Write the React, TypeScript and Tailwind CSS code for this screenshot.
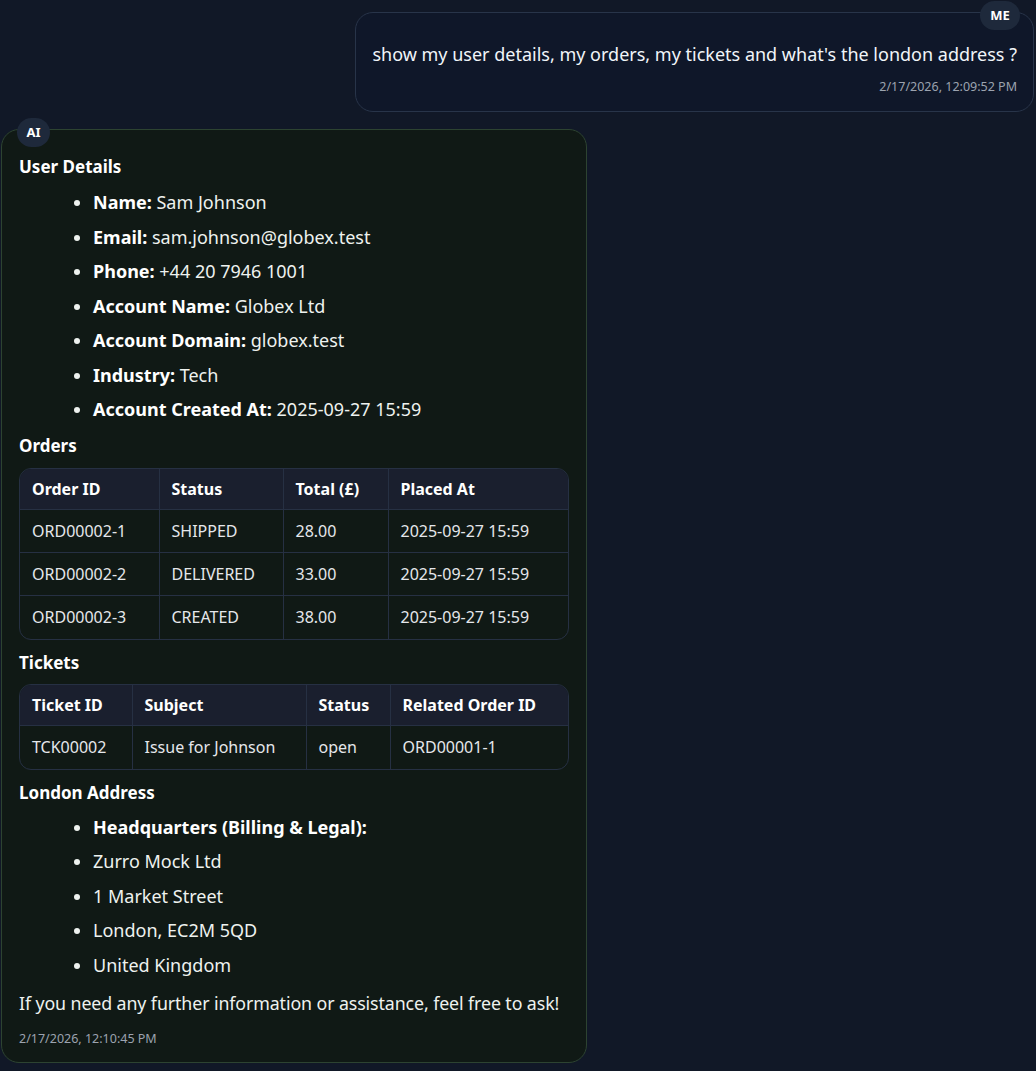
import React from 'react';

const font = { fontFamily: '"Segoe UI", "Noto Sans", sans-serif' };

const orders = [
  ['ORD00002-1', 'SHIPPED', '28.00', '2025-09-27 15:59'],
  ['ORD00002-2', 'DELIVERED', '33.00', '2025-09-27 15:59'],
  ['ORD00002-3', 'CREATED', '38.00', '2025-09-27 15:59'],
];

const tickets = [['TCK00002', 'Issue for Johnson', 'open', 'ORD00001-1']];

function Table({ cols, widths, rows }: { cols: string[]; widths: string[]; rows: string[][] }) {
  return (
    <div className="overflow-hidden rounded-[12px] border border-[#263043]">
      <table className="w-full border-collapse text-[16px] text-[#e5e7eb]">
        <thead>
          <tr className="bg-[#1a1f2e]">
            {cols.map((c, i) => (
              <th
                key={c}
                className={`h-[41px] px-[12px] text-left font-bold text-white border-b border-[#263043] ${i > 0 ? 'border-l' : ''} ${widths[i]}`}
              >
                {c}
              </th>
            ))}
          </tr>
        </thead>
        <tbody>
          {rows.map((r, ri) => (
            <tr key={ri}>
              {r.map((v, i) => (
                <td
                  key={i}
                  className={`h-[43px] px-[12px] border-[#263043] ${i > 0 ? 'border-l' : ''} ${ri < rows.length - 1 ? 'border-b' : ''}`}
                >
                  {v}
                </td>
              ))}
            </tr>
          ))}
        </tbody>
      </table>
    </div>
  );
}

function Item({ label, value }: { label?: string; value?: string }) {
  return (
    <li className="leading-[34.5px]">
      {label && <strong className="font-bold text-white">{label}</strong>}
      {value && <span> {value}</span>}
    </li>
  );
}

export default function App() {
  return (
    <div className="min-h-screen bg-[#111827] pt-[12px] pl-[1px] pr-[2px]" style={font}>
      <div className="flex justify-end">
        <div className="relative w-[679px] rounded-[18px] border border-[#283449] bg-[#0f1729] pt-[28px] pb-[16px] pr-[16px] text-right">
          <div className="absolute right-[13px] -top-[12px] flex h-[29px] w-[40px] items-center justify-center rounded-full bg-[#1e293b] text-[13px] font-bold text-white">
            ME
          </div>
          <p className="text-[18px] leading-[27px] text-[#f1f5f9]">
            show my user details, my orders, my tickets and what's the london address ?
          </p>
          <p className="mt-[11px] text-[12.5px] leading-[16px] text-[#9ca3af]">2/17/2026, 12:09:52 PM</p>
        </div>
      </div>

      <div className="relative mt-[17px] w-[586px] rounded-[18px] border border-[#2d4331] bg-[#101915] px-[17px] pt-[25px] pb-[15px] text-[18px] text-[#eef2ef]">
        <div className="absolute left-[15px] -top-[12px] flex h-[29px] w-[33px] items-center justify-center rounded-full bg-[#1e293b] text-[13px] font-bold text-white">
          AI
        </div>

        <h3 className="text-[17px] font-bold leading-[24px] text-white">User Details</h3>
        <ul className="mt-[6px] list-disc pl-[74px]">
          <Item label="Name:" value="Sam Johnson" />
          <Item label="Email:" value="sam.johnson@globex.test" />
          <Item label="Phone:" value="+44 20 7946 1001" />
          <Item label="Account Name:" value="Globex Ltd" />
          <Item label="Account Domain:" value="globex.test" />
          <Item label="Industry:" value="Tech" />
          <Item label="Account Created At:" value="2025-09-27 15:59" />
        </ul>

        <h3 className="mt-[7px] text-[17px] font-bold leading-[24px] text-white">Orders</h3>
        <div className="mt-[10px]">
          <Table
            cols={['Order ID', 'Status', 'Total (£)', 'Placed At']}
            widths={['w-[139px]', 'w-[124px]', 'w-[105px]', '']}
            rows={orders}
          />
        </div>

        <h3 className="mt-[11px] text-[17px] font-bold leading-[24px] text-white">Tickets</h3>
        <div className="mt-[9px]">
          <Table
            cols={['Ticket ID', 'Subject', 'Status', 'Related Order ID']}
            widths={['w-[112px]', 'w-[174px]', 'w-[84px]', '']}
            rows={tickets}
          />
        </div>

        <h3 className="mt-[11px] text-[17px] font-bold leading-[24px] text-white">London Address</h3>
        <ul className="mt-[5px] list-disc pl-[74px]">
          <Item label="Headquarters (Billing & Legal):" />
          <Item value="Zurro Mock Ltd" />
          <Item value="1 Market Street" />
          <Item value="London, EC2M 5QD" />
          <Item value="United Kingdom" />
        </ul>

        <p className="mt-[8px] whitespace-nowrap text-[17.8px] leading-[27px] tracking-[-0.1px]">
          If you need any further information or assistance, feel free to ask!
        </p>
        <p className="mt-[14px] text-[12.5px] leading-[16px] text-[#9ca3af]">2/17/2026, 12:10:45 PM</p>
      </div>
    </div>
  );
}
